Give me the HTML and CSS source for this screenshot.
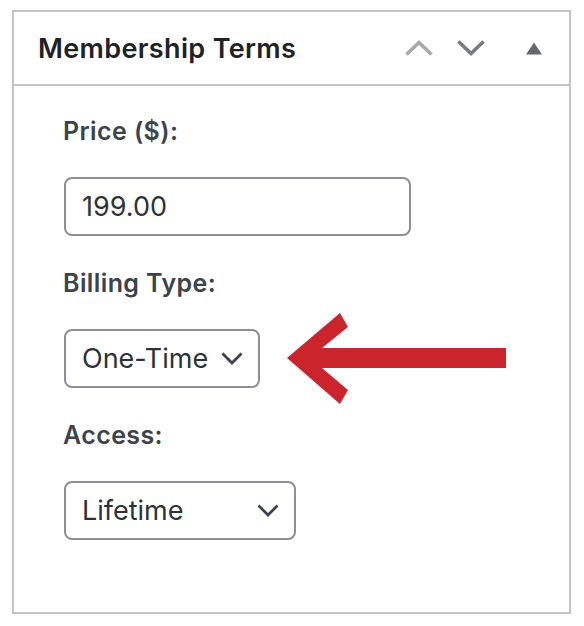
FILE: index.html
```html
<!DOCTYPE html>
<html lang="en">
<head>
<meta charset="utf-8">
<title>Membership Terms</title>
<link rel="stylesheet" href="styles.css">
</head>
<body>
<div class="postbox">
  <div class="postbox-header">
    <h2 class="hndle">Membership Terms</h2>
    <div class="handle-actions">
      <span class="handle-btn up" aria-label="Move up">
        <svg width="28" height="16" viewBox="0 0 28 16"><polyline points="1.5,14.5 14,2.5 26.5,14.5" fill="none" stroke="#a7aaad" stroke-width="3.6"/></svg>
      </span>
      <span class="handle-btn down" aria-label="Move down">
        <svg width="28" height="16" viewBox="0 0 28 16"><polyline points="1.5,1.5 14,13.5 26.5,1.5" fill="none" stroke="#787c82" stroke-width="3.6"/></svg>
      </span>
      <span class="handle-btn toggle" aria-label="Toggle panel">
        <svg width="16" height="13" viewBox="0 0 16 13"><polygon points="0,12.5 8,0.5 16,12.5" fill="#646970"/></svg>
      </span>
    </div>
  </div>
  <div class="inside">
    <label class="field-label">Price ($):</label>
    <div class="control text-input">199.00</div>

    <label class="field-label spaced">Billing Type:</label>
    <div class="row">
      <div class="control select billing">
        <span>One-Time</span>
        <svg class="chev" width="22" height="13" viewBox="0 0 22 13"><polyline points="1.5,1.5 11,11 20.5,1.5" fill="none" stroke="#3c434a" stroke-width="2.8"/></svg>
      </div>
      <svg class="arrow" width="219" height="93" viewBox="0 0 219 93"><polygon points="0,46 53,1 61,15 35,36 219,36 219,56 35,56 61,78 53,92" fill="#cb242d"/></svg>
    </div>

    <label class="field-label spaced">Access:</label>
    <div class="control select access">
      <span>Lifetime</span>
      <svg class="chev" width="22" height="13" viewBox="0 0 22 13"><polyline points="1.5,1.5 11,11 20.5,1.5" fill="none" stroke="#3c434a" stroke-width="2.8"/></svg>
    </div>
  </div>
</div>
</body>
</html>
```

FILE: styles.css
```css
* { box-sizing: border-box; }

html, body {
  margin: 0;
  padding: 0;
  background: #ffffff;
}

body {
  font-family: Inter, "Liberation Sans", Arial, sans-serif;
  color: #1d2327;
}

.postbox {
  margin: 10px 0 0 12px;
  width: 559px;
  height: 604px;
  border: 2px solid #c3c4c7;
  background: #fff;
  display: flex;
  flex-direction: column;
}

.postbox-header {
  height: 74px;
  border-bottom: 2px solid #c3c4c7;
  display: flex;
  align-items: center;
  justify-content: space-between;
  padding: 0 27px 0 24px;
}

.hndle {
  margin: 0;
  font-size: 27px;
  font-weight: 600;
  letter-spacing: 0.35px;
  color: #1d2327;
  line-height: 1;
}

.handle-actions {
  display: flex;
  align-items: center;
}

.handle-btn {
  display: flex;
  align-items: center;
}

.handle-btn svg { display: block; }

.handle-btn.down { margin-left: 24px; }
.handle-btn.toggle { margin-left: 41px; }

.inside {
  padding: 31px 0 0 49px;
  display: flex;
  flex-direction: column;
  align-items: flex-start;
}

.field-label {
  display: block;
  font-size: 25px;
  font-weight: 600;
  letter-spacing: 0.4px;
  line-height: 28px;
  color: #3c434a;
  margin-bottom: 32px;
}

.field-label.spaced { margin-top: 33px; }

.control {
  height: 59px;
  border: 2px solid #8c8f94;
  border-radius: 8px;
  background: #fff;
  margin-left: 1px;
  padding-left: 16px;
  display: flex;
  align-items: center;
  font-size: 27px;
  color: #2c3338;
}

.text-input { width: 347px; }

.select {
  justify-content: space-between;
  padding-right: 15px;
}

.select.billing { width: 196px; }
.select.access { width: 232px; }

.chev { display: block; }

.row {
  display: flex;
  align-items: center;
  gap: 27px;
}

.arrow {
  display: block;
  margin: -17px 0;
}
```
